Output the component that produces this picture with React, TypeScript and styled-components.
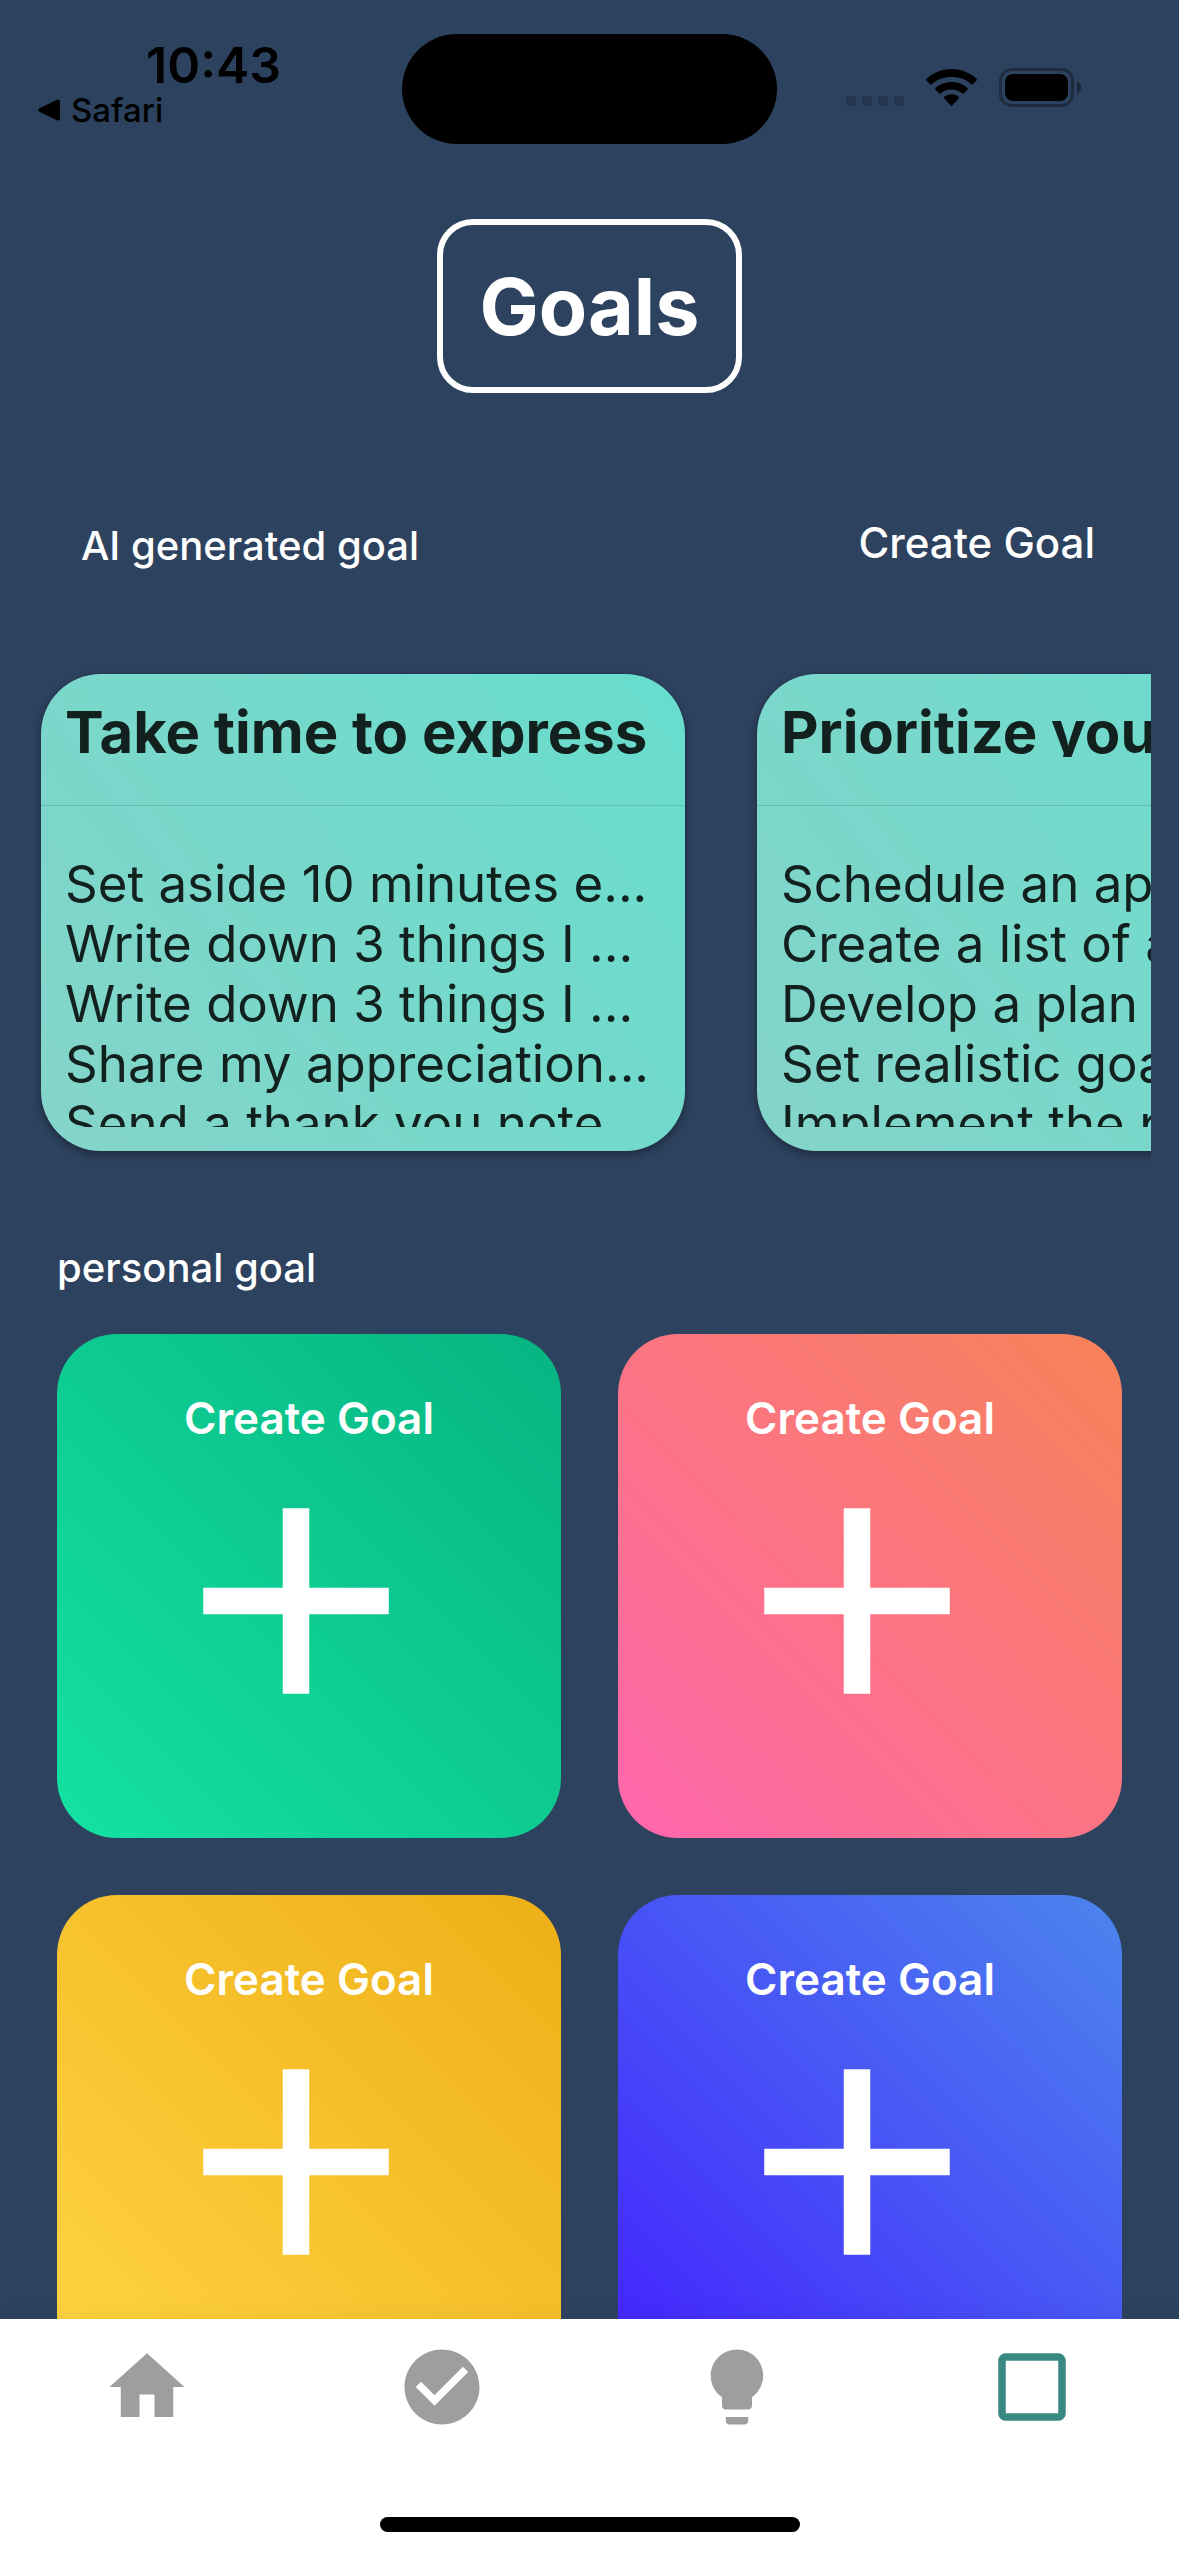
import React from "react";
import styled, { createGlobalStyle } from "styled-components";
import {
  MdAdd,
  MdCheckBoxOutlineBlank,
  MdCheckCircle,
  MdHome,
  MdLightbulb,
} from "react-icons/md";

const GlobalStyle = createGlobalStyle`
  *, *::before, *::after { box-sizing: border-box; }
  body { margin: 0; background: #2d425f; font-family: Inter, "Liberation Sans", sans-serif; }
  button { border: 0; padding: 0; background: none; color: inherit; font-family: inherit; cursor: pointer; }
  h1, h2, h3, ul { margin: 0; padding: 0; }
  ul { list-style: none; }
`;

const Screen = styled.div`
  display: flex;
  flex-direction: column;
  height: 100vh;
  overflow: hidden;
  background: #2d425f;
  color: #fff;
`;

const StatusBar = styled.div`
  display: grid;
  grid-template-columns: 1fr 375px 1fr;
  flex: none;
  color: #000;
`;

const ClockArea = styled.div`
  padding: 38px 0 0 38px;
`;

const Clock = styled.time`
  display: block;
  padding-left: 108px;
  font-size: 50px;
  line-height: 54px;
  font-weight: 600;
`;

const BackLink = styled.a`
  display: flex;
  align-items: center;
  gap: 10px;
  color: inherit;
  font-size: 33px;
  line-height: 36px;
  font-weight: 500;
  text-decoration: none;
`;

const Island = styled.div`
  height: 110px;
  margin-top: 34px;
  border-radius: 55px;
  background: #000;
`;

const Indicators = styled.div`
  display: flex;
  align-items: flex-end;
  justify-content: flex-end;
  gap: 22px;
  height: 107px;
  padding-right: 98px;
`;

const Signal = styled.div`
  display: flex;
  gap: 6px;
  padding-bottom: 1px;
`;

const SignalDot = styled.span`
  width: 10px;
  height: 10px;
  border-radius: 3px;
  background: #26354e;
`;

const Content = styled.main`
  display: flex;
  flex: 1;
  flex-direction: column;
  min-height: 0;
  padding-top: 75px;
  overflow: hidden auto;
  scrollbar-width: none;
`;

const PageTitle = styled.h1`
  align-self: center;
  flex: none;
  padding: 34px 36px;
  border: 6px solid #fff;
  border-radius: 36px;
  font-size: 79px;
  line-height: 94px;
  font-weight: 700;
`;

const SectionBar = styled.div`
  display: flex;
  flex: none;
  align-items: flex-start;
  justify-content: space-between;
  margin-top: 126px;
  padding: 0 84px 0 81px;
`;

const SectionTitle = styled.h2`
  font-size: 40px;
  line-height: 54px;
  font-weight: 500;
`;

const CreateLink = styled.button`
  font-size: 42px;
  line-height: 48px;
  font-weight: 500;
`;

const CardStrip = styled.div`
  display: flex;
  flex: none;
  gap: 72px;
  margin: 89px 28px 0;
  padding: 12px 13px 24px;
  overflow: auto hidden;
  scrollbar-width: none;
`;

const GoalCard = styled.article`
  flex: none;
  width: 644px;
  border-radius: 60px;
  background: linear-gradient(53deg, #85d4c9, #67ddcd);
  box-shadow: 0 3px 9px rgba(0, 0, 0, 0.4);
  color: #12201e;
`;

const CardHeader = styled.header`
  height: 132px;
  padding: 25px 24px 0;
  border-bottom: 1px solid #63bfb2;
`;

const CardTitle = styled.h3`
  height: 58px;
  overflow: hidden;
  font-size: 58px;
  line-height: 66px;
  font-weight: 700;
  white-space: nowrap;
`;

const StepList = styled.ul`
  height: 273px;
  margin: 48px 24px 24px;
  overflow: hidden;
  font-size: 51px;
  line-height: 60px;
  white-space: nowrap;
`;

const PersonalTitle = styled.h2`
  margin: 69px 57px 42px;
  font-size: 40px;
  line-height: 48px;
  font-weight: 500;
`;

const TileGrid = styled.div`
  display: grid;
  grid-template-columns: 1fr 1fr;
  gap: 57px;
  padding: 0 57px 57px;
`;

const Tile = styled.button<{ $from: string; $to: string }>`
  display: flex;
  flex-direction: column;
  align-items: center;
  aspect-ratio: 1;
  padding-top: 60px;
  border-radius: 60px;
  background: linear-gradient(to top right, ${(p) => p.$from}, ${(p) => p.$to});
  color: #fff;
  font-size: 44px;
  line-height: 48px;
  font-weight: 600;
`;

const PlusIcon = styled(MdAdd)`
  flex: none;
  width: 318px;
  height: 318px;
  margin-right: 26px;
`;

const BottomNav = styled.nav`
  flex: none;
  padding: 23px 0 24px;
  background: #fff;
  box-shadow: 0 0 24px rgba(0, 0, 0, 0.06);
`;

const Tabs = styled.div`
  display: grid;
  grid-template-columns: repeat(4, 1fr);
`;

const Tab = styled.button<{ $active?: boolean }>`
  display: flex;
  justify-content: center;
  color: ${(p) => (p.$active ? "#378982" : "#9e9e9e")};
  font-size: 90px;
`;

const HomeIndicator = styled.div`
  width: 420px;
  height: 15px;
  margin: 85px auto 0;
  border-radius: 8px;
  background: #000;
`;

const goals = [
  {
    title: "Take time to express",
    steps: [
      "Set aside 10 minutes e...",
      "Write down 3 things I ...",
      "Write down 3 things I ...",
      "Share my appreciation...",
      "Send a thank you note",
    ],
  },
  {
    title: "Prioritize your",
    steps: [
      "Schedule an app...",
      "Create a list of a...",
      "Develop a plan",
      "Set realistic goals",
      "Implement the p...",
    ],
  },
];

const tiles = [
  { from: "#14e2a2", to: "#07b481" },
  { from: "#ff66ae", to: "#f78357" },
  { from: "#ffd542", to: "#eeaf18" },
  { from: "#4320ff", to: "#4c85ed" },
];

const tabs = [
  { name: "Home", Icon: MdHome },
  { name: "Tasks", Icon: MdCheckCircle },
  { name: "Ideas", Icon: MdLightbulb },
  { name: "Goals", Icon: MdCheckBoxOutlineBlank, active: true },
];

const BackArrow = () => (
  <svg width="23" height="22" viewBox="0 0 23 22" aria-hidden="true">
    <path d="M1.4 9.2 19 .7c1.6-.8 3 0 3 1.8v17c0 1.8-1.4 2.6-3 1.8L1.4 12.8c-1.7-.9-1.7-2.7 0-3.6z" />
  </svg>
);

const WifiIcon = () => (
  <svg width="51" height="38" viewBox="0 0 51 38" aria-hidden="true">
    <path d="M25.5 0C15.6 0 6.7 3.8.4 10.1c-.4.4-.4.9 0 1.3l3.8 3.9c.4.4.9.4 1.3 0C10.7 10.3 17.7 7.9 25.500 7.900s14.800 2.400 20 7.400c.4.4.9.4 1.300 0l3.800-3.900c.4-.4.4-.9 0-1.300C44.300 3.800 35.400 0 25.500 0z" />
    <path d="M25.5 12.900c-6.200 0-11.800 2.300-16.100 6.200-.4.4-.4.9 0 1.300l3.900 4c.4.4.9.4 1.300.1 3-2.700 6.700-4.100 10.900-4.100s7.900 1.400 10.900 4.100c.4.3.9.3 1.300-.1l3.900-4c.4-.4.4-.9 0-1.300-4.300-3.900-9.900-6.200-16.100-6.200z" />
    <path d="M25.5 25.300c-2.800 0-5.300 1-7.300 2.700-.4.4-.4.9 0 1.300l6.600 7.300c.4.4 1 .4 1.400 0l6.600-7.300c.4-.4.4-.9 0-1.300-2-1.700-4.500-2.700-7.300-2.700z" />
  </svg>
);

const BatteryIcon = () => (
  <svg width="82" height="39" viewBox="0 0 82 39" aria-hidden="true">
    <rect x="1.5" y="1.5" width="72" height="36" rx="11" fill="none" stroke="#1f2c40" strokeWidth="3" />
    <rect x="6" y="6" width="63" height="27" rx="8" />
    <path d="M78 13.500c2.500 1 4 3.300 4 6s-1.500 5-4 6z" fill="#1b2636" />
  </svg>
);

export default function App() {
  return (
    <>
      <GlobalStyle />
      <Screen>
        <StatusBar>
          <ClockArea>
            <Clock>10:43</Clock>
            <BackLink href="#safari">
              <BackArrow />
              Safari
            </BackLink>
          </ClockArea>
          <Island />
          <Indicators>
            <Signal>
              <SignalDot />
              <SignalDot />
              <SignalDot />
              <SignalDot />
            </Signal>
            <WifiIcon />
            <BatteryIcon />
          </Indicators>
        </StatusBar>

        <Content>
          <PageTitle>Goals</PageTitle>

          <SectionBar>
            <SectionTitle>AI generated goal</SectionTitle>
            <CreateLink type="button">Create Goal</CreateLink>
          </SectionBar>

          <CardStrip>
            {goals.map((goal) => (
              <GoalCard key={goal.title}>
                <CardHeader>
                  <CardTitle>{goal.title}</CardTitle>
                </CardHeader>
                <StepList>
                  {goal.steps.map((step, i) => (
                    <li key={i}>{step}</li>
                  ))}
                </StepList>
              </GoalCard>
            ))}
          </CardStrip>

          <PersonalTitle>personal goal</PersonalTitle>
          <TileGrid>
            {tiles.map((tile) => (
              <Tile key={tile.from} type="button" $from={tile.from} $to={tile.to}>
                Create Goal
                <PlusIcon aria-hidden="true" />
              </Tile>
            ))}
          </TileGrid>
        </Content>

        <BottomNav>
          <Tabs>
            {tabs.map(({ name, Icon, active }) => (
              <Tab key={name} type="button" aria-label={name} $active={active}>
                <Icon aria-hidden="true" />
              </Tab>
            ))}
          </Tabs>
          <HomeIndicator />
        </BottomNav>
      </Screen>
    </>
  );
}
